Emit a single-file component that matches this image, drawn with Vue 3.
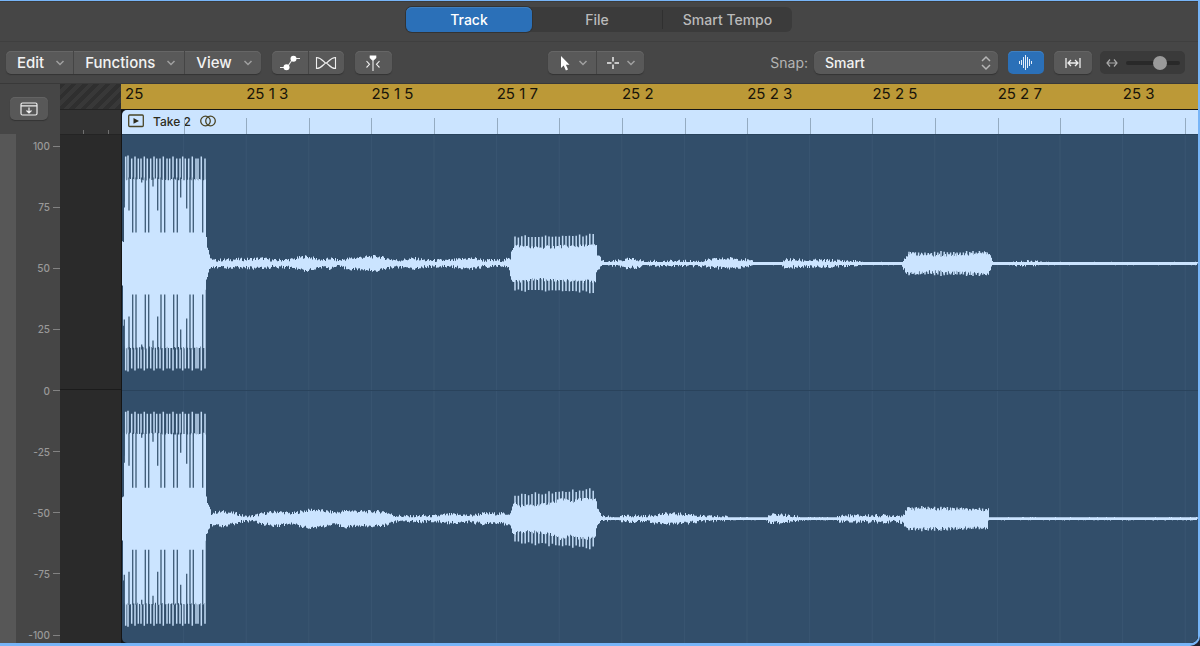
<script setup>
import { ref } from "vue";

const tabs = ["Track", "File", "Smart Tempo"];
const activeTab = ref("Track");
const menus = ["Edit", "Functions", "View"];
const snap = ref("Smart");
const zoom = ref(68);
const showWaveform = ref(true);

const bars = ["25", "25 1 3", "25 1 5", "25 1 7", "25 2", "25 2 3", "25 2 5", "25 2 7", "25 3"];
const levels = ["100", "75", "50", "25", "0", "-25", "-50", "-75", "-100"];

// opening burst: thin peaks above the body, gaps cut into it
const peaks = [
	3.7, 6, 9.7, 13, 16.3, 19, 22.3, 25.3, 28.7, 32, 34.7, 38, 41.3, 45, 47.7, 51,
	54.7, 58, 60.7, 63.3, 66.7, 70.3, 74, 76, 79.3, 83,
];
const gaps = [10.7, 14, 23.3, 26.7, 39, 42.7, 51.7, 55.3, 68, 71.3, 80.7];
const shortGaps = [[7, 53], [2.3, 56], [19.7, 81], [31, 77], [35.7, 53], [58.7, 66], [64.7, 55]];

// [x, half height] pairs, joined by straight lines
const channels = [
	{
		mid: 128.5,
		seed: 3,
		shape: [
			[0, 22], [1, 22], [2, 62], [3, 84], [83, 84], [84, 27], [85, 16], [87, 8], [89, 5], [90, 3],
			[112, 4], [122, 4], [140, 5], [152, 3], [170, 4], [178, 6], [184, 7], [192, 5], [202, 3],
			[208, 5], [216, 3], [228, 5], [238, 6], [255, 7], [264, 5], [275, 3], [292, 5], [304, 3],
			[330, 3], [345, 5], [352, 5], [362, 3], [380, 3], [388, 5], [389, 13], [392, 18],
			[410, 16], [440, 17], [474, 18], [475, 9], [477, 7], [480, 3], [482, 1],
			[492, 2], [505, 4], [515, 4], [524, 1], [531, 2], [560, 2], [578, 2], [590, 4],
			[610, 5], [622, 4], [632, 1], [658, 1], [664, 4], [680, 3], [704, 3], [734, 2], [742, 1],
			[780, 1], [782, 5], [786, 10], [800, 9], [815, 8], [840, 9], [867, 11], [869, 5], [871, 1],
			[888, 1], [895, 2], [935, 1], [1076, 1],
		],
		spikes: [392, 474, 29, 30],
		small: [786, 867, 12, 13],
	},
	{
		mid: 383.7,
		seed: 8,
		shape: [
			[0, 22], [1, 22], [2, 62], [3, 85], [83, 85], [84, 22], [85, 15], [87, 11], [89, 5],
			[90, 6], [102, 7], [114, 5], [123, 2], [128, 2], [140, 5], [155, 7], [170, 5], [178, 7],
			[190, 9], [206, 7], [214, 6], [225, 8], [240, 7], [262, 7], [272, 3], [290, 2], [300, 3],
			[308, 2], [324, 4], [336, 4], [348, 3], [360, 5], [388, 5], [390, 11], [392, 17], [395, 13],
			[412, 13], [430, 16], [440, 20], [450, 17], [460, 20], [474, 19], [475, 10], [477, 6], [480, 2],
			[492, 1], [510, 3], [525, 2], [533, 4], [548, 5], [570, 4], [580, 2], [600, 2], [615, 1],
			[644, 1], [650, 4], [660, 4], [670, 2], [690, 1], [712, 1], [720, 3], [752, 3], [778, 3], [782, 5],
			[785, 10], [820, 10], [866, 9], [867, 3], [868, 1], [1076, 1],
		],
		spikes: [392, 474, 25, 31],
		small: [786, 866, 13, 11],
	},
];

function envelope(shape, x) {
	const i = shape.findIndex((p) => p[0] >= x);
	if (i <= 0) return shape[0][1];
	const [x0, y0] = shape[i - 1];
	const [x1, y1] = shape[i];
	return y0 + ((y1 - y0) * (x - x0)) / (x1 - x0);
}

function noise(n) {
	const v = Math.sin(n * 12.9898) * 43758.5453;
	return v - Math.floor(v);
}

function bodyPath({ shape, mid, seed }) {
	let top = "";
	let bottom = "";
	for (let x = 0; x < 1076; x++) {
		const h = envelope(shape, x);
		const wobble = h > 50 ? 2 : h < 1.5 ? 1.4 : 3.5;
		const up = mid - Math.max(1.4, h + (noise(x + seed) - 0.5) * wobble);
		const down = mid + Math.max(1.4, h + (noise(x + seed + 400) - 0.5) * wobble);
		top += `L${x} ${up.toFixed(1)}H${x + 1}`;
		bottom = `H${x}V${down.toFixed(1)}` + bottom;
	}
	return `M0 ${mid}${top}V${mid}${bottom}Z`;
}

function peakPath({ mid }) {
	return peaks
		.map((x, i) => {
			const h = i === 1 ? 108 : 105 + (i % 3 === 0 ? 2 : 0);
			return `M${x} ${mid - h}V${mid + h}`;
		})
		.join("");
}

function gapPath({ mid }) {
	const cuts = [...gaps.map((x) => [x, 31]), ...shortGaps];
	return cuts
		.map(([x, h]) => `M${x} ${mid - 86}V${mid - h}M${x} ${mid + h}V${mid + 86}`)
		.join("");
}

function spikePath([from, to, h0, h1], mid, step, seed) {
	let d = "";
	for (let x = from + 1; x <= to; x += step) {
		const h = h0 + ((h1 - h0) * (x - from)) / (to - from) - noise(x + seed) * (h0 > 20 ? 3 : 2);
		d += `M${x.toFixed(1)} ${(mid - h).toFixed(1)}V${(mid + h).toFixed(1)}`;
	}
	return d;
}

const waves = channels.map((c) => ({
	body: bodyPath(c),
	peaks: peakPath(c),
	gaps: gapPath(c),
	spikes: spikePath(c.spikes, c.mid, 3.4, c.seed) + spikePath(c.small, c.mid, 3.2, c.seed),
}));

const gridLines = Array.from({ length: 17 }, (_, i) => (i + 1) * 62.6 - 1);
</script>

<template>
	<main class="window">
		<nav class="tab-bar">
			<div class="tabs" role="tablist">
				<button
					v-for="tab in tabs"
					:key="tab"
					class="tab"
					:class="{ active: tab === activeTab }"
					role="tab"
					:aria-selected="tab === activeTab"
					@click="activeTab = tab"
				>
					{{ tab }}
				</button>
			</div>
		</nav>

		<header class="toolbar">
			<div class="tools left">
				<div class="group">
					<button v-for="menu in menus" :key="menu" class="menu">
						{{ menu }}
						<svg class="chevron" viewBox="0 0 10 6"><path d="M1.5 1 5 4.5 8.5 1" /></svg>
					</button>
				</div>
				<div class="group">
					<button class="tool" aria-label="Show automation">
						<svg width="22" height="16" viewBox="0 0 22 16">
							<path class="line" d="M1 12.5H8L14 3.5H21" />
							<circle class="solid" cx="7.5" cy="12.2" r="3" />
							<circle class="solid" cx="14.5" cy="3.8" r="3" />
						</svg>
					</button>
					<button class="tool" aria-label="Flex">
						<svg width="22" height="16" viewBox="0 0 22 16">
							<path class="line" d="M1.5 2.5C7 2.5 9 8 11 8S15 2.5 20.5 2.5V13.5C15 13.5 13 8 11 8S7 13.5 1.5 13.5Z" />
						</svg>
					</button>
				</div>
				<div class="group">
					<button class="tool wide" aria-label="Catch transients">
						<svg width="16" height="18" viewBox="0 0 16 18">
							<path class="solid" d="M4.7 1.5H11.3V4L8.7 6.5H7.3L4.7 4Z" />
							<path class="line" d="M8 5V17M1.5 7 4.5 10.3 1.5 13.5M14.5 7 11.5 10.3 14.5 13.5" />
						</svg>
					</button>
				</div>
			</div>

			<div class="group">
				<button class="tool split" aria-label="Pointer tool">
					<svg width="12" height="16" viewBox="0 0 12 16">
						<path class="solid" d="M2 1V13L4.7 10.5 6.9 15.5 9 14.6 6.9 9.8H10.5Z" />
					</svg>
					<svg class="chevron" viewBox="0 0 10 6"><path d="M1.5 1 5 4.5 8.5 1" /></svg>
				</button>
				<button class="tool split" aria-label="Marquee tool">
					<svg width="12" height="12" viewBox="0 0 12 12">
						<path class="line bold" d="M6 0V4.5M6 7.5V12M0 6H4.5M7.5 6H12" />
					</svg>
					<svg class="chevron" viewBox="0 0 10 6"><path d="M1.5 1 5 4.5 8.5 1" /></svg>
				</button>
			</div>

			<div class="tools right">
				<label class="snap-label" for="snap">Snap:</label>
				<div class="select">
					<select id="snap" v-model="snap">
						<option>Smart</option>
						<option>Bar</option>
						<option>Beat</option>
					</select>
					<svg width="10" height="16" viewBox="0 0 10 16">
						<path d="M1 6 5 2 9 6M1 10 5 14 9 10" />
					</svg>
				</div>
				<button
					class="square"
					:class="{ on: showWaveform }"
					aria-label="Waveform zoom"
					@click="showWaveform = !showWaveform"
				>
					<svg width="14" height="15" viewBox="0 0 14 15">
						<path class="bars" d="M0.5 6V9M2.5 5V10M4.5 2V13M6.5 0V15M8.5 2V13M10.5 4V11M12.5 6V9" />
					</svg>
				</button>
				<button class="square last" aria-label="Zoom to fit">
					<svg width="16" height="10" viewBox="0 0 16 10">
						<path class="line fit" d="M1 0V10M15 0V10M3 5H13M6 2 3 5 6 8M10 2 13 5 10 8" />
					</svg>
				</button>
				<div class="slider">
					<svg width="12" height="10" viewBox="0 0 12 10">
						<path d="M1 5H11M4 1.5 1 5 4 8.5M8 1.5 11 5 8 8.5" />
					</svg>
					<input v-model="zoom" type="range" min="0" max="100" aria-label="Horizontal zoom" />
				</div>
			</div>
		</header>

		<section class="editor">
			<aside class="gutter">
				<div class="gutter-head">
					<button class="catch" aria-label="Catch playhead">
						<svg width="18" height="14" viewBox="0 0 18 14">
							<path d="M2.5 1H15.5Q17 1 17 2.5V11.5Q17 13 15.5 13H2.5Q1 13 1 11.5V2.5Q1 1 2.5 1ZM1 3.8H17M9 5.5V11M6.5 8.5 9 11 11.5 8.5" />
						</svg>
					</button>
				</div>
				<ul class="scale">
					<li v-for="level in levels" :key="level">{{ level }}</li>
				</ul>
			</aside>

			<div class="before">
				<div class="hatch"></div>
				<div class="before-ticks"><i></i><i></i></div>
				<div class="before-body"></div>
			</div>

			<div class="track">
				<div class="ruler">
					<span v-for="bar in bars" :key="bar">{{ bar }}</span>
				</div>
				<div class="region">
					<div class="region-head">
						<div class="region-name">
							<svg width="16" height="14" viewBox="0 0 16 14">
								<rect x="0.7" y="1" width="14.6" height="11.5" rx="1" />
								<path class="play" d="M5.5 4V9.8L11 6.9Z" />
							</svg>
							<span>Take 2</span>
							<svg width="16" height="12" viewBox="0 0 16 12">
								<circle cx="5.5" cy="6" r="4.8" />
								<circle cx="10.5" cy="6" r="4.8" />
							</svg>
						</div>
						<div class="ticks"><i v-for="n in 18" :key="n"></i></div>
					</div>
					<svg class="wave" viewBox="0 0 1076 508" preserveAspectRatio="none">
						<path v-for="x in gridLines" :key="x" class="grid" :d="`M${x} 0V508`" />
						<path class="zero" d="M0 255.5H1076" />
						<template v-if="showWaveform">
							<g v-for="(wave, i) in waves" :key="i">
								<path class="peaks" :d="wave.peaks" />
								<path class="peaks" :d="wave.spikes" />
								<path class="body" :d="wave.body" />
								<path class="gaps" :d="wave.gaps" />
							</g>
						</template>
					</svg>
				</div>
			</div>
		</section>
	</main>
</template>

<style>
body {
	margin: 0;
	background: #211f2c;
}
</style>

<style scoped>
* {
	box-sizing: border-box;
}

.window {
	display: flex;
	flex-direction: column;
	min-height: 100vh;
	border: solid #77b5f8;
	border-width: 1px 2px 3px 0;
	border-radius: 0 0 10px 0;
	background: #464646;
	overflow: hidden;
	font-family: Inter, "Liberation Sans", sans-serif;
	font-size: 14px;
	color: #f2f2f2;
}

button,
select {
	border: 0;
	padding: 0;
	font: inherit;
	font-weight: 500;
	color: inherit;
	background: none;
}

svg {
	flex: none;
	fill: none;
}

.tab-bar {
	display: flex;
	justify-content: center;
	height: 41px;
	padding-top: 5px;
	border-top: 1px solid #3b3b3b;
	border-bottom: 1px solid #3f3f3f;
}

.tabs {
	display: grid;
	grid-template-columns: 126px 1fr 1fr;
	width: 386px;
	height: 25px;
	border-radius: 6px;
	background: #3b3b3b;
}

.tab {
	padding-bottom: 1px;
	border-radius: 6px;
	color: #bababa;
}

.tab:last-child {
	border-left: 1px solid;
	border-image: linear-gradient(transparent 15%, #303030 15%, #303030 85%, transparent 85%) 1;
}

.tab.active {
	background: #2b70b8;
	color: #fff;
	box-shadow: inset 0 1px 0 #4080c0, 0 0 0 1px #333;
}

.toolbar {
	display: flex;
	align-items: center;
	height: 42px;
	padding: 0 13px 0 6px;
	border-bottom: 1px solid #393939;
}

.tools {
	display: flex;
	align-items: center;
	flex: 1 1 0;
}

.left {
	gap: 11px;
}

.right {
	justify-content: flex-end;
}

.group {
	display: flex;
	height: 23px;
	border-radius: 5px;
	background: #595959;
	box-shadow: inset 0 1px 0 #666, 0 1px 1px #333;
}

.group button {
	display: flex;
	align-items: center;
	justify-content: center;
}

.group button + button {
	border-left: 1px solid #454545;
}

.group .menu {
	gap: 11px;
	padding: 0 8px 0 11px;
	font-size: 15px;
}

.chevron {
	width: 10px;
	height: 6px;
	stroke: #a0a0a0;
	stroke-width: 1.5;
}

.tool {
	width: 36px;
}

.tool.wide {
	width: 37px;
}

.tool.split {
	gap: 7px;
	width: 48px;
	padding-left: 3px;
}

.line {
	stroke: #eee;
	stroke-width: 1.1;
}

.bold {
	stroke-width: 1.5;
}

.fit {
	stroke-width: 1.3;
}

.bars {
	stroke: #e4eefa;
	stroke-width: 1;
}

.solid {
	fill: #fff;
}

.snap-label {
	margin-right: 6px;
	color: #b4b4b4;
}

.select {
	position: relative;
	width: 184px;
}

.select select {
	display: block;
	appearance: none;
	width: 100%;
	height: 23px;
	padding: 0 24px 1px 11px;
	border-radius: 6px;
	background: #595959;
	box-shadow: inset 0 1px 0 #646464, 0 1px 1px #333;
}

.select svg {
	position: absolute;
	top: 4px;
	right: 7px;
	stroke: #b5b5b5;
	stroke-width: 1.5;
	pointer-events: none;
}

.square {
	display: flex;
	align-items: center;
	justify-content: center;
	width: 36px;
	height: 23px;
	margin-left: 10px;
	border-radius: 5px;
	background: #595959;
	box-shadow: inset 0 1px 0 #646464, 0 1px 1px #333;
}

.square.on {
	background: #2b70b8;
	box-shadow: inset 0 1px 0 #4080c0;
}

.square.last {
	width: 38px;
}

.slider {
	display: flex;
	align-items: center;
	gap: 8px;
	width: 85px;
	height: 23px;
	margin-left: 8px;
	padding: 0 5px 0 6px;
	border-radius: 5px;
	background: #3a3a3a;
}

.slider svg {
	stroke: #aaa;
	stroke-width: 1.2;
}

.slider input {
	appearance: none;
	flex: 1;
	min-width: 0;
	height: 14px;
	margin: 0;
	background: none;
}

.slider input::-webkit-slider-runnable-track {
	height: 4px;
	border-radius: 2px;
	background: #292929;
}

.slider input::-webkit-slider-thumb {
	appearance: none;
	width: 14px;
	height: 14px;
	margin-top: -5px;
	border-radius: 50%;
	background: #9a9a9a;
}

.editor {
	display: flex;
	flex: 1;
}

.gutter {
	display: flex;
	flex-direction: column;
	width: 60px;
}

.gutter-head {
	height: 50px;
	padding: 13px 0 0 10px;
}

.catch {
	display: flex;
	align-items: center;
	justify-content: center;
	width: 38px;
	height: 23px;
	border-radius: 5px;
	background: #585858;
	box-shadow: inset 0 1px 0 #636363, 0 1px 1px #333;
}

.catch svg {
	stroke: #eee;
	stroke-width: 1.2;
}

.scale {
	display: flex;
	flex: 1;
	flex-direction: column;
	justify-content: space-between;
	margin: 0;
	padding: 5px 0 1px;
	border-left: 16px solid #575757;
	list-style: none;
	font-size: 10px;
	font-weight: 500;
	line-height: 14px;
	color: #999;
}

.scale li {
	display: flex;
	align-items: center;
	justify-content: flex-end;
	gap: 3px;
}

.scale li::after {
	content: "";
	width: 7px;
	height: 1px;
	background: #828282;
}

.before {
	display: flex;
	flex-direction: column;
	width: 62px;
	border-right: 1px solid #151515;
}

.hatch {
	height: 25px;
	background: repeating-linear-gradient(135deg, #2f2f2f 0 4px, #383838 4px 8px);
}

.before-ticks {
	display: flex;
	align-items: flex-end;
	gap: 24px;
	height: 25px;
	padding-left: 23px;
	border-top: 1px solid #242424;
	background: #333;
}

.before-ticks i {
	width: 1px;
	height: 4px;
	background: #707070;
}

.before-body {
	flex: 1;
	border-top: 1px solid #242424;
	background: linear-gradient(#1b1b1b, #1b1b1b) 0 50% / 100% 1px no-repeat #2a2a2a;
}

.track {
	display: flex;
	flex: 1;
	flex-direction: column;
	min-width: 0;
	background: #151515;
}

.ruler {
	display: grid;
	grid-template-columns: repeat(8, 5fr) 3fr;
	height: 25px;
	margin-left: -1px;
	background: #bc9937;
	line-height: 19px;
	font-size: 15px;
	color: #17140a;
	white-space: nowrap;
}

.ruler span:first-child {
	padding-left: 4px;
}

.region {
	display: flex;
	flex: 1;
	flex-direction: column;
	margin-top: 1px;
	border-radius: 5px 0 0 5px;
	overflow: hidden;
	background: #324e6a;
}

.region-head {
	display: grid;
	height: 24px;
	background: #cbe4ff;
}

.region-head > div {
	grid-area: 1 / 1;
}

.region-name {
	display: flex;
	align-items: center;
	gap: 9px;
	padding: 0 0 2px 6px;
	font-size: 12px;
	font-weight: 500;
	color: #2e2c1c;
}

.region-name svg {
	stroke: #4a4526;
	stroke-width: 1.3;
}

.region-name .play {
	fill: #2e2c1c;
	stroke: none;
}

.ticks {
	display: grid;
	grid-template-columns: repeat(17, 5fr) 1fr;
	align-items: end;
	margin-left: -1px;
}

.ticks i {
	height: 16px;
	border-left: 1px solid #94abc1;
}

.ticks i:first-child {
	border-color: transparent;
}

.wave {
	display: block;
	flex: 1 1 auto;
	width: 100%;
	height: 480px;
	border-top: 1px solid #29435c;
}

.grid {
	stroke: #3a5671;
}

.zero {
	stroke: #2a435c;
}

.body {
	fill: #cbe4ff;
}

.peaks {
	stroke: #c3dcf6;
	stroke-width: 1.5;
}

.gaps {
	stroke: #3c5974;
	stroke-width: 1.3;
}
</style>
